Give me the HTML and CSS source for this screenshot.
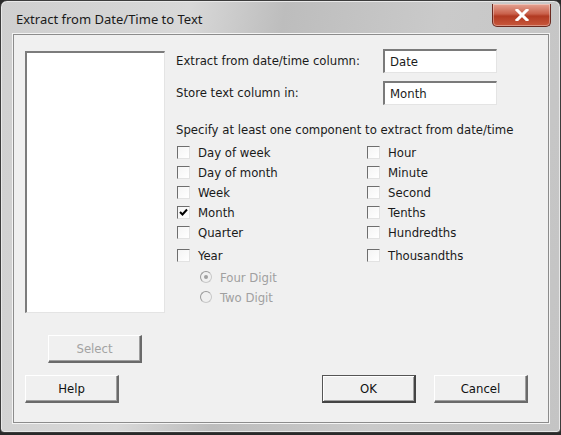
FILE: index.html
```html
<!DOCTYPE html>
<html lang="en">
<head>
<meta charset="UTF-8">
<title>Extract from Date/Time to Text</title>
<link rel="stylesheet" href="styles.css">
</head>
<body>

<div class="window">
    <div class="titlebar">
        <span class="title">Extract from Date/Time to Text</span>
        <button class="btn-close">
            <svg width="16" height="12" viewBox="0 0 16 12"><path d="M3 1 L13 11 M13 1 L3 11" stroke="#fff" stroke-width="3" stroke-linecap="square"/></svg>
        </button>
    </div>

    <div class="client">
        <div class="main">
            <div class="left-col">
                <div class="listbox"></div>
                <button class="btn btn-select" disabled>Select</button>
            </div>

            <div class="right-col">
                <div class="field-row">
                    <label>Extract from date/time column:</label>
                    <div class="textbox">Date</div>
                </div>
                <div class="field-row">
                    <label>Store text column in:</label>
                    <div class="textbox">Month</div>
                </div>

                <p class="hint">Specify at least one component to extract from date/time</p>

                <div class="checks">
                    <div class="check-col">
                        <div class="check"><span class="box"></span>Day of week</div>
                        <div class="check"><span class="box"></span>Day of month</div>
                        <div class="check"><span class="box"></span>Week</div>
                        <div class="check"><span class="box"><svg width="11" height="11" viewBox="0 0 11 11"><path d="M2 5 L4.5 7.5 L9 2.5" fill="none" stroke="#000" stroke-width="2"/></svg></span>Month</div>
                        <div class="check"><span class="box"></span>Quarter</div>
                        <div class="check tall"><span class="box"></span>Year</div>
                        <div class="radio disabled"><span class="dot on"></span>Four Digit</div>
                        <div class="radio disabled"><span class="dot"></span>Two Digit</div>
                    </div>
                    <div class="check-col">
                        <div class="check"><span class="box"></span>Hour</div>
                        <div class="check"><span class="box"></span>Minute</div>
                        <div class="check"><span class="box"></span>Second</div>
                        <div class="check"><span class="box"></span>Tenths</div>
                        <div class="check"><span class="box"></span>Hundredths</div>
                        <div class="check tall"><span class="box"></span>Thousandths</div>
                    </div>
                </div>
            </div>
        </div>

        <div class="bottom">
            <button class="btn">Help</button>
            <div class="spacer"></div>
            <button class="btn btn-ok">OK</button>
            <button class="btn">Cancel</button>
        </div>
    </div>
</div>

</body>
</html>
```

FILE: styles.css
```css
body {
    margin: 0;
    background: #2a2a2a;
    font-family: "DejaVu Sans Condensed", "DejaVu Sans", sans-serif;
    font-stretch: condensed;
}
.window {
    box-sizing: border-box;
    width: 561px;
    height: 433px;
    border: 1px solid #3c3c3c;
    border-radius: 7px 7px 4px 4px;
    background: linear-gradient(100deg, #cfcfcf 0%, #d8d8d8 30%, #bdbdbd 45%, #cacaca 70%, #c4c4c4 100%);
    box-shadow: inset 0 0 0 1px #e8e8e8;
    padding: 0 11px 9px 12px;
}
.titlebar {
    height: 33px;
    display: flex;
    align-items: flex-start;
}
.title {
    font-family: "Noto Sans", "Open Sans", sans-serif;
    font-stretch: normal;
    font-size: 13px;
    color: #1a1a1a;
    margin: 9px 0 0 3px;
    flex: 1;
}
.btn-close {
    width: 59px;
    height: 23px;
    margin-top: 3px;
    margin-right: -2px;
    border: 1px solid #6b2a20;
    border-top: none;
    border-radius: 0 0 5px 5px;
    background: linear-gradient(#e5a393, #c9604a 45%, #b23a22 55%, #c8583c);
    box-shadow: inset 0 0 0 1px rgba(255,255,255,0.35);
    display: flex;
    align-items: center;
    justify-content: center;
    padding: 0;
}
.client {
    box-sizing: border-box;
    height: 389px;
    background: #f0f0f0;
    border: 1px solid #8c8c8c;
    box-shadow: 0 0 0 1px #f4f4f4;
    font-size: 13px;
    color: #1a1a1a;
}
.main {
    display: flex;
    height: 340px;
}
.left-col {
    flex-shrink: 0;
    width: 140px;
    margin: 16px 0 0 11px;
    display: flex;
    flex-direction: column;
}
.listbox {
    height: 262px;
    background: #fff;
    border-top: 2px solid #7c7c7c;
    border-left: 2px solid #7c7c7c;
    border-right: 1px solid #e4e4e4;
    border-bottom: 1px solid #e4e4e4;
    box-sizing: border-box;
}
.btn {
    box-sizing: border-box;
    width: 94px;
    height: 28px;
    font-family: "DejaVu Sans Condensed", "DejaVu Sans", sans-serif;
    font-stretch: condensed;
    font-size: 13px;
    color: #111;
    background: #f0f0f0;
    border: 1px solid #fff;
    border-right: 2px solid #6a6a6a;
    border-bottom: 2px solid #6a6a6a;
    box-shadow: inset -1px -1px 0 #a0a0a0;
    padding: 0;
}
.btn-select {
    margin: 22px 0 0 23px;
    color: #a3a3a3;
}
.btn-ok {
    border: 1px solid #555;
    border-right: 2px solid #444;
    border-bottom: 2px solid #444;
    box-shadow: inset 1px 1px 0 #fff, inset -1px -1px 0 #a0a0a0;
}
.right-col {
    margin-left: 11px;
    padding-top: 14px;
    flex: 1;
}
.field-row {
    display: flex;
    align-items: center;
    height: 23px;
    margin-bottom: 9px;
}
.field-row label {
    width: 207px;
}
.textbox {
    box-sizing: border-box;
    width: 114px;
    height: 24px;
    background: #fff;
    border-top: 2px solid #7a7a7a;
    border-left: 2px solid #7a7a7a;
    border-right: 1px solid #e4e4e4;
    border-bottom: 1px solid #e4e4e4;
    padding: 3px 0 0 5px;
}
.hint {
    margin: 18px 0 5px;
}
.checks {
    display: flex;
}
.check-col {
    width: 190px;
}
.check {
    display: flex;
    align-items: center;
    height: 20px;
    padding-left: 1px;
}
.check.tall {
    height: 23px;
    padding-top: 2px;
}
.box {
    box-sizing: border-box;
    width: 13px;
    height: 13px;
    margin-right: 8px;
    background: linear-gradient(135deg, #f4f4f4, #fff);
    border-top: 1px solid #6e6e6e;
    border-left: 1px solid #6e6e6e;
    border-right: 1px solid #e2e2e2;
    border-bottom: 1px solid #e2e2e2;
    display: flex;
}
.radio {
    display: flex;
    align-items: center;
    height: 20px;
    padding-left: 24px;
    color: #a0a0a0;
}
.dot {
    box-sizing: border-box;
    width: 12px;
    height: 12px;
    border-radius: 50%;
    border: 1px solid #c8c8c8;
    border-top-color: #9a9a9a;
    border-left-color: #9a9a9a;
    margin-right: 8px;
    display: flex;
    align-items: center;
    justify-content: center;
}
.dot.on::after {
    content: "";
    width: 4px;
    height: 4px;
    border-radius: 50%;
    background: #a0a0a0;
}
.bottom {
    display: flex;
    padding: 0 20px 0 11px;
}
.spacer {
    flex: 1;
}
.bottom .btn + .btn {
    margin-left: 18px;
}
.bottom .spacer + .btn {
    margin-left: 0;
}
```
